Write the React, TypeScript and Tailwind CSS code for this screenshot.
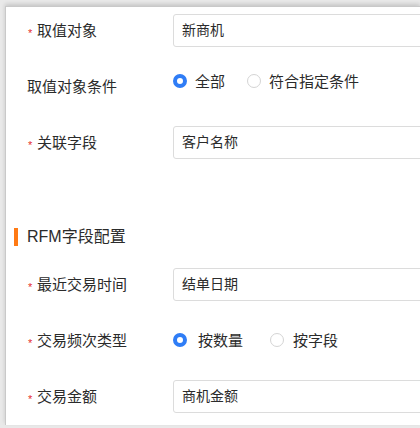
import React, { useState } from 'react';

const font = { fontFamily: '"Liberation Sans", "Noto Sans CJK SC", sans-serif' };

const Label: React.FC<{ text: string; required?: boolean; align?: string }> = ({ text, required, align = 'items-center' }) => (
  <div className={`w-[167px] shrink-0 flex ${align} text-[15px] text-[#2b2b2b] ${required ? 'pl-[22px]' : 'pl-[21px]'}`}>
    {required && <span className="w-[9px] text-[11px] leading-none text-[#e52e2e] relative top-[3px]">*</span>}
    <span className="leading-none">{text}</span>
  </div>
);

const TextRow: React.FC<{ label: string; value: string; className?: string }> = ({ label, value, className = '' }) => (
  <div className={`flex h-[33px] ${className}`}>
    <Label text={label} required />
    <div className="w-[262px] shrink-0 h-[33px] border border-[#dcdcdc] rounded-[3px] flex items-center pl-[8px] text-[14px] text-[#2b2b2b]">
      {value}
    </div>
  </div>
);

const Radio: React.FC<{ checked: boolean; label: string; onClick: () => void; gap: string; className?: string }> = ({ checked, label, onClick, gap, className = '' }) => (
  <button type="button" onClick={onClick} className={`flex items-center ${className}`}>
    <span
      className={`w-[14px] h-[14px] rounded-full bg-white ${checked ? 'border-[4px] border-[#2f7df6]' : 'border border-[#d4d4d4]'}`}
    />
    <span className={`${gap} text-[15px] leading-none text-[#2b2b2b]`}>{label}</span>
  </button>
);

const App: React.FC = () => {
  const [scope, setScope] = useState<'all' | 'cond'>('all');
  const [freq, setFreq] = useState<'count' | 'field'>('count');

  return (
    <div className="w-[420px] h-[428px] bg-[#e9e9e9] pt-[6px] pl-[5px] pb-[3px] overflow-hidden" style={font}>
      <div className="h-[419px] bg-white border-t border-l border-[#c9c9c9] shadow-[0_-2px_4px_rgba(0,0,0,0.15)] overflow-hidden pt-[7px]">
        <TextRow label="取值对象" value="新商机" />

        <div className="flex h-[34px] mt-[17px]">
          <Label text="取值对象条件" align="items-start pt-[15px]" />
          <div className="flex items-center">
            <Radio checked={scope === 'all'} label="全部" gap="ml-[8px]" onClick={() => setScope('all')} />
            <Radio checked={scope === 'cond'} label="符合指定条件" gap="ml-[8px]" className="ml-[22px]" onClick={() => setScope('cond')} />
          </div>
        </div>

        <TextRow label="关联字段" value="客户名称" className="mt-[28px]" />

        <div className="flex items-center h-[18px] mt-[69px] pl-[8px]">
          <span className="w-[4px] h-[18px] bg-[#ff7a14]" />
          <span className="ml-[9px] text-[16px] leading-none text-[#2b2b2b]">RFM字段配置</span>
        </div>

        <TextRow label="最近交易时间" value="结单日期" className="mt-[22px]" />

        <div className="flex h-[34px] mt-[22px]">
          <Label text="交易频次类型" required align="items-center pt-[1px]" />
          <div className="flex items-center">
            <Radio checked={freq === 'count'} label="按数量" gap="ml-[11px]" onClick={() => setFreq('count')} />
            <Radio checked={freq === 'field'} label="按字段" gap="ml-[9px]" className="ml-[27px]" onClick={() => setFreq('field')} />
          </div>
        </div>

        <TextRow label="交易金额" value="商机金额" className="mt-[23px]" />
      </div>
    </div>
  );
};

export default App;
